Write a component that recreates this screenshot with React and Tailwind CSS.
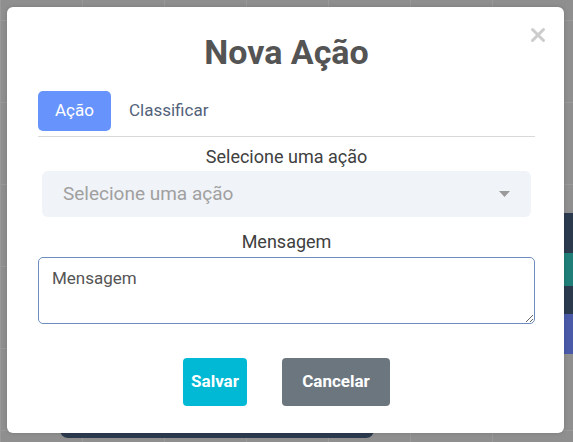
import { X } from "lucide-react";

export default function App() {
  return (
    <div
      className="relative h-[442px] w-[573px] overflow-hidden bg-[#8f8f8f] bg-[linear-gradient(#999_1px,transparent_1px),linear-gradient(90deg,#999_1px,transparent_1px)] bg-[size:82px_82px] bg-[position:0_20px]"
      style={{ fontFamily: "Roboto, 'Liberation Sans', sans-serif" }}
    >
      {/* page behind the dialog */}
      <div className="absolute left-[60px] top-[400px] h-[38px] w-[314px] rounded-b-[8px] bg-[#2c3a4e]" />
      <div className="absolute left-[564px] top-[213px] flex w-[40px] flex-col">
        <div className="h-[40px] bg-[#2c3a4e]" />
        <div className="h-[33px] bg-[#1f7f78]" />
        <div className="h-[28px] bg-[#2c3a4e]" />
        <div className="h-[40px] bg-[#4a5aa8]" />
      </div>

      {/* dialog */}
      <div className="absolute left-[7px] top-[7px] flex h-[426px] w-[557px] flex-col rounded-[6px] bg-white pl-[31px] pr-[29px] pt-[26px] shadow-[0_0_4px_rgba(0,0,0,0.15)]">
        <button className="absolute right-[15px] top-[17px] text-[#cccccc]">
          <X size={22} strokeWidth={3.2} />
        </button>

        <h2 className="text-center text-[34px] font-bold leading-[38px] text-[#545454]">
          Nova Ação
        </h2>

        <div className="mt-[20px] flex items-center gap-[18px] border-b border-[#d9d9d9] pb-[5px]">
          <button className="h-[40px] rounded-[5px] bg-[#6794fc] px-[17px] text-[17px] text-white">
            Ação
          </button>
          <button className="text-[17px] text-[#52627a]">Classificar</button>
        </div>

        <label className="mt-[10px] text-center text-[18px] leading-[20px] text-[#404040]">
          Selecione uma ação
        </label>
        <div className="mx-[4px] mt-[4px] flex h-[46px] items-center justify-between rounded-[6px] bg-[#f0f3f8] pl-[21px] pr-[21px]">
          <span className="text-[19px] text-[#a0a0a0]">Selecione uma ação</span>
          <svg width="11" height="6" viewBox="0 0 11 6">
            <path d="M0 0h11L5.5 6z" fill="#9a9a9a" />
          </svg>
        </div>

        <label className="mt-[15px] text-center text-[18px] leading-[20px] text-[#404040]">
          Mensagem
        </label>
        <textarea
          className="mt-[5px] h-[67px] w-full resize-y rounded-[5px] border border-[#6e8dbf] px-[13px] py-[8px] text-[17px] text-[#555] placeholder:text-[#555] outline-none"
          placeholder="Mensagem"
        />

        <div className="mt-[34px] flex justify-center gap-[35px]">
          <button className="h-[48px] w-[64px] rounded-[4px] bg-[#01b9d5] text-[17px] font-bold text-white">
            Salvar
          </button>
          <button className="h-[48px] w-[108px] rounded-[4px] bg-[#6c767f] text-[17px] font-bold text-white">
            Cancelar
          </button>
        </div>
      </div>
    </div>
  );
}
